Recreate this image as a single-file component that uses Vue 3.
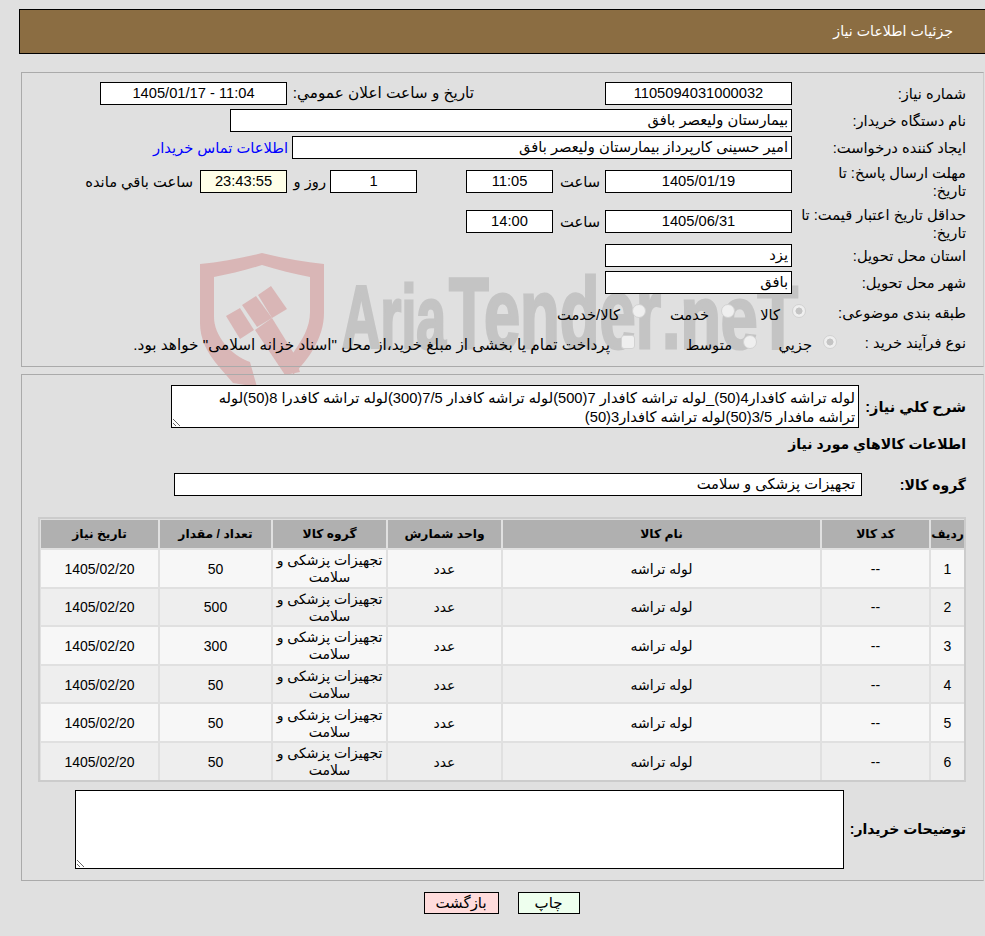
<script setup>
const rows = [
  { id: 1, qty: 50 },
  { id: 2, qty: 500 },
  { id: 3, qty: 300 },
  { id: 4, qty: 50 },
  { id: 5, qty: 50 },
  { id: 6, qty: 50 },
];
const desc =
  "لوله تراشه كافدار4(50)_لوله تراشه كافدار 7(500)لوله تراشه كافدار 7/5(300)لوله تراشه كافدرا 8(50)لوله تراشه مافدار 3/5(50)لوله تراشه كافدار3(50)";
</script>

<template>
  <div class="page" dir="rtl">
    <svg class="watermark" width="660" height="170" viewBox="0 0 660 170">
      <g fill="#d9b6b6">
        <path d="M10 24 C30 22 52 18 72 13 C92 18 114 22 134 24 L134 73 C134 98 118 120 103 135 L103 113 C112 100 120 88 120 72 L120 37 C104 34 88 30 72 25 C56 30 40 34 24 37 L24 77 C24 95 40 115 60 122 L67 147 L43 143 L30 128 C16 112 10 98 10 83 Z" />
        <polygon points="36,76 50,68 64,90 50,99" />
        <polygon points="52,65 66,56 82,78 67,87" />
        <polygon points="68,55 81,46 97,69 82,78" />
        <polygon points="82,78 103,112 110,132 95,135 65,90" />
      </g>
      <text class="wm-text" x="152" y="108" textLength="104" lengthAdjust="spacingAndGlyphs">Aria</text>
      <text class="wm-text wm-big" x="259" y="108" textLength="212" lengthAdjust="spacingAndGlyphs">Tender</text>
      <text class="wm-text" x="472" y="108" textLength="136" lengthAdjust="spacingAndGlyphs">.neT</text>
    </svg>

    <header class="title-bar">جزئیات اطلاعات نیاز</header>

    <section class="panel top-panel">
      <div class="row r1">
        <label class="lbl">شماره نیاز:</label>
        <div class="box c w-187">1105094031000032</div>
        <div class="side-label">تاریخ و ساعت اعلان عمومي:</div>
        <div class="box c w-187">11:04 - 1405/01/17</div>
      </div>
      <div class="row r2">
        <label class="lbl">نام دستگاه خریدار:</label>
        <div class="box w-562">بیمارستان ولیعصر بافق</div>
      </div>
      <div class="row r3">
        <label class="lbl">ایجاد کننده درخواست:</label>
        <div class="box w-500">امیر حسینی کارپرداز بیمارستان ولیعصر بافق</div>
        <a class="contact">اطلاعات تماس خریدار</a>
      </div>
      <div class="row r4">
        <label class="lbl two">مهلت ارسال پاسخ: تا<br />تاریخ:</label>
        <div class="box c w-187">1405/01/19</div>
        <span class="hour">ساعت</span>
        <div class="box c w-87">11:05</div>
        <div class="box c w-87 day">1</div>
        <span class="day-lbl">روز و</span>
        <div class="box c w-87 timer">23:43:55</div>
        <span class="left-lbl">ساعت باقي مانده</span>
      </div>
      <div class="row r5">
        <label class="lbl two">حداقل تاریخ اعتبار قیمت: تا<br />تاریخ:</label>
        <div class="box c w-187">1405/06/31</div>
        <span class="hour">ساعت</span>
        <div class="box c w-87">14:00</div>
      </div>
      <div class="row r6">
        <label class="lbl">استان محل تحویل:</label>
        <div class="box w-187">یزد</div>
      </div>
      <div class="row r7">
        <label class="lbl">شهر محل تحویل:</label>
        <div class="box w-187">بافق</div>
      </div>
      <div class="row r8">
        <label class="lbl">طبقه بندی موضوعی:</label>
        <span class="radio on"></span><span class="opt o-kala">کالا</span>
        <span class="radio"></span><span class="opt o-khed">خدمت</span>
        <span class="radio"></span><span class="opt">کالا/خدمت</span>
      </div>
      <div class="row r9">
        <label class="lbl">نوع فرآیند خرید :</label>
        <span class="radio on"></span><span class="opt o-joz">جزيي</span>
        <span class="radio"></span><span class="opt o-mot">متوسط</span>
        <span class="check"></span><span class="opt long">پرداخت تمام یا بخشی از مبلغ خرید،از محل "اسناد خزانه اسلامی" خواهد بود.</span>
      </div>
    </section>

    <section class="panel bottom-panel">
      <div class="desc-row">
        <label class="blbl">شرح كلي نیاز:</label>
        <textarea class="area desc" readonly :value="desc"></textarea>
      </div>
      <h4 class="blbl info">اطلاعات كالاهاي مورد نیاز</h4>
      <div class="group-row">
        <label class="blbl">گروه كالا:</label>
        <div class="box group">تجهیزات پزشکی و سلامت</div>
      </div>

      <div class="table">
        <div class="th">ردیف</div>
        <div class="th">کد کالا</div>
        <div class="th">نام کالا</div>
        <div class="th">واحد شمارش</div>
        <div class="th">گروه کالا</div>
        <div class="th">تعداد / مقدار</div>
        <div class="th">تاریخ نیاز</div>
        <template v-for="r in rows" :key="r.id">
          <div class="td" :class="{ alt: r.id % 2 == 0 }">{{ r.id }}</div>
          <div class="td" :class="{ alt: r.id % 2 == 0 }">--</div>
          <div class="td" :class="{ alt: r.id % 2 == 0 }">لوله تراشه</div>
          <div class="td" :class="{ alt: r.id % 2 == 0 }">عدد</div>
          <div class="td" :class="{ alt: r.id % 2 == 0 }">تجهیزات پزشکی و سلامت</div>
          <div class="td" :class="{ alt: r.id % 2 == 0 }">{{ r.qty }}</div>
          <div class="td" :class="{ alt: r.id % 2 == 0 }">1405/02/20</div>
        </template>
      </div>

      <div class="notes-row">
        <label class="blbl">توضیحات خریدار:</label>
        <textarea class="area notes" readonly></textarea>
      </div>
    </section>

    <div class="actions">
      <button class="btn print">چاپ</button>
      <button class="btn back">بازگشت</button>
    </div>
  </div>
</template>

<style>
html,
body {
  margin: 0;
  background: #e0e0e0;
}
</style>

<style scoped>
.page {
  position: relative;
  width: 985px;
  height: 936px;
  box-sizing: border-box;
  padding-top: 9px;
  overflow: hidden;
  background: #e0e0e0;
  color: #000;
  font-family: "Liberation Sans", "DejaVu Sans", sans-serif;
  font-size: 14px;
}
.watermark {
  position: absolute;
  left: 190px;
  top: 240px;
  direction: ltr;
}
.wm-text {
  font-family: "Liberation Sans", sans-serif;
  font-weight: 700;
  font-size: 89px;
  fill: #c4c4c4;
  stroke: #c4c4c4;
  stroke-width: 3px;
}
.wm-big {
  font-size: 100px;
}
.title-bar,
.panel,
.actions {
  position: relative;
}
.title-bar {
  margin-left: 19px;
  height: 43px;
  padding-right: 32px;
  border: 1px solid #000;
  border-right: 0;
  background: #8b6d42;
  color: #fff;
  font-size: 14.2px;
  line-height: 43px;
}
.panel {
  margin-left: 21px;
  margin-right: 1px;
  border: 1px solid #aaa;
  border-right-color: #ccc;
}
.top-panel {
  margin-top: 18px;
  height: 295px;
  box-sizing: border-box;
  font-size: 14.7px;
}
.row {
  position: absolute;
  right: 0;
  left: 0;
  display: flex;
  align-items: center;
  height: 22px;
}
.r1 { top: 9px; }
.r2 { top: 36px; }
.r3 { top: 63px; }
.r4 { top: 97px; }
.r5 { top: 137px; }
.r6 { top: 171px; }
.r7 { top: 198px; }
.r8 { top: 227px; }
.r9 { top: 258px; }
.lbl {
  flex: none;
  width: 170px;
  margin-right: 17px;
  margin-left: 4px;
  padding-top: 2px;
  line-height: 18px;
  white-space: nowrap;
}
.r5 .lbl { margin-top: 3px; }
.r8 .lbl { width: 156px; padding-top: 3px; }
.r9 .lbl { width: 125px; padding-top: 2px; }
.box {
  flex: none;
  box-sizing: border-box;
  height: 23px;
  padding: 0 3px;
  border: 1px solid #000;
  background: #fff;
  line-height: 21px;
  white-space: nowrap;
}
.c {
  text-align: center;
}
.w-187 { width: 187px; }
.w-562 { width: 562px; }
.w-500 { width: 500px; }
.w-87 { width: 87px; }
.side-label {
  width: 182px;
  margin: 0 131px 0 5px;
  font-size: 15.3px;
  text-align: right;
  white-space: nowrap;
}
.contact {
  margin-right: 4px;
  color: #00f;
  white-space: nowrap;
}
.hour {
  width: 42px;
  margin: 0 5px;
}
.day { margin-right: 49px; }
.day-lbl {
  width: 30px;
  margin: 0 4px 0 9px;
  text-align: right;
  white-space: nowrap;
}
.timer { background: #ffffe8; }
.left-lbl { margin-right: 7px; white-space: nowrap; }
.radio,
.check {
  flex: none;
  box-sizing: border-box;
  width: 14px;
  height: 14px;
  border: 1px solid #d2d2d2;
  border-radius: 50%;
  background: #efefef;
}
.check { border-radius: 3px; }
.radio.on {
  background: radial-gradient(circle, #c4c4c4 0 3.2px, #efefef 3.8px);
}
.opt {
  flex: none;
  margin-right: 12px;
  padding-top: 5px;
  white-space: nowrap;
}
.r8 .opt { padding-top: 7px; }
.o-kala { width: 45px; }
.o-khed { width: 63px; }
.o-joz { width: 55px; margin-right: 11px; }
.o-mot { width: 97px; margin-right: 11px; }
.long { margin-right: 11px; font-size: 15.3px; }
.bottom-panel {
  margin-top: 7px;
  height: 507px;
  box-sizing: border-box;
}
.blbl {
  margin: 0;
  font-size: 14px;
  font-weight: 700;
}
.desc-row {
  display: flex;
  align-items: center;
  padding: 10px 17px 0 0;
}
.desc-row .blbl { width: 107px; font-size: 14.5px; }
.area {
  display: block;
  box-sizing: border-box;
  border: 1px solid #000;
  border-radius: 0;
  outline: 0;
  background: #fff;
  color: #000;
  font: inherit;
  direction: rtl;
  overflow: hidden;
}
.desc {
  width: 688px;
  height: 43px;
  padding: 3px 3px 3px 12px;
  font-size: 14.7px;
  line-height: 19px;
}
.info {
  margin: 7px 17px 0 0;
  line-height: 18px;
}
.group-row {
  display: flex;
  align-items: center;
  margin-top: 20px;
  padding-right: 17px;
}
.group-row .blbl { width: 87px; margin-left: 17px; }
.group {
  width: 688px;
  padding-right: 6px;
  font-size: 14.7px;
}
.table {
  display: grid;
  grid-template-columns: 33px 107px 317px 113px 113px 111px 117px;
  grid-template-rows: 28px;
  grid-auto-rows: 36.6px;
  gap: 2px;
  width: 928px;
  box-sizing: border-box;
  margin: 21px 17px 0 0;
  padding: 1px 0 0 1px;
  border: 2px solid #ccc;
}
.th,
.td {
  display: flex;
  align-items: center;
  justify-content: center;
  text-align: center;
  line-height: 17px;
}
.th {
  background: #b0b0b0;
  font-size: 12.3px;
  font-weight: 700;
}
.td {
  padding-top: 2px;
  box-sizing: border-box;
  background: #f7f7f7;
}
.td.alt { background: #eee; }
.notes-row {
  display: flex;
  align-items: center;
  margin-top: 8px;
  padding-right: 17px;
}
.notes-row .blbl { width: 122px; }
.notes {
  width: 769px;
  height: 79px;
}
.actions {
  display: flex;
  justify-content: center;
  gap: 19px;
  margin-top: 11px;
  padding-left: 18px;
}
.btn {
  box-sizing: border-box;
  height: 22px;
  border: 1px solid #000;
  padding: 0;
  color: #000;
  font: inherit;
  font-size: 15px;
}
.print { width: 62px; background: #eeffee; }
.back { width: 75px; background: #ffdcdc; }
</style>
